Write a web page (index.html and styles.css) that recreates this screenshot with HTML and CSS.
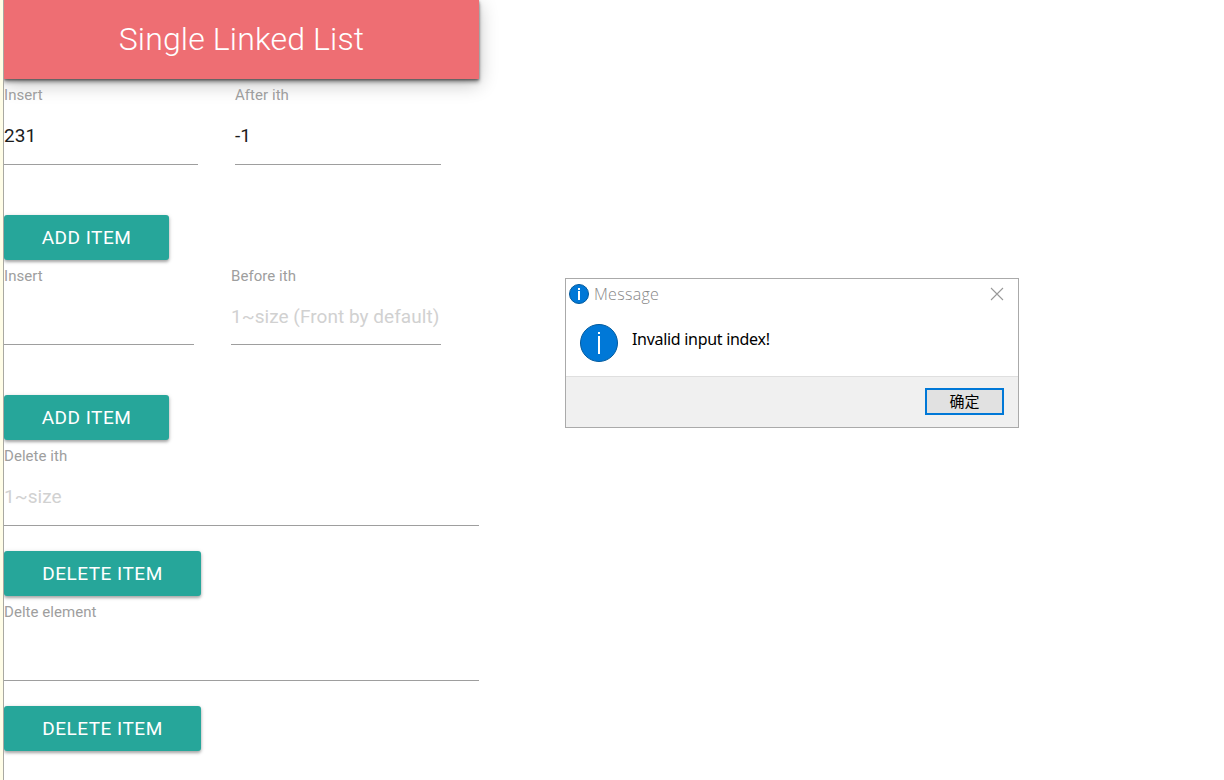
FILE: index.html
```
<!DOCTYPE html>
<html lang="en">
<head>
<meta charset="utf-8">
<title>Single Linked List</title>
<link rel="stylesheet" href="styles.css">
</head>
<body>
<main class="page">
  <div class="rail"></div>
  <aside class="panel">
    <h1 class="banner"><span>Single Linked List</span></h1>
    <section class="operation tall">
      <div class="fields after">
        <div class="field"><label class="label">Insert</label><div class="value">231</div></div>
        <div class="field"><label class="label">After ith</label><div class="value">-1</div></div>
      </div>
      <button class="action add">ADD ITEM</button>
    </section>
    <section class="operation">
      <div class="fields before">
        <div class="field"><label class="label">Insert</label></div>
        <div class="field"><label class="label">Before ith</label><div class="value hint">1~size (Front by default)</div></div>
      </div>
      <button class="action add">ADD ITEM</button>
    </section>
    <section class="operation tall compact">
      <div class="fields">
        <div class="field"><label class="label">Delete ith</label><div class="value hint">1~size</div></div>
      </div>
      <button class="action delete">DELETE ITEM</button>
    </section>
    <section class="operation compact">
      <div class="fields">
        <div class="field"><label class="label">Delte element</label></div>
      </div>
      <button class="action delete">DELETE ITEM</button>
    </section>
  </aside>
  <div class="canvas">
    <div class="dialog" role="dialog">
      <div class="titlebar">
        <svg width="20" height="20" viewBox="0 0 20 20"><circle cx="10" cy="10" r="9.5" fill="#0078d7" stroke="#005a9e"/><path d="M9 4h2v2H9zM9 7h2v9H9z" fill="#fff"/></svg>
        <span class="caption">Message</span>
        <svg class="close" width="14" height="14" viewBox="0 0 14 14"><path d="M1 1l12 12M13 1L1 13" stroke="#999" stroke-width="1.1"/></svg>
      </div>
      <div class="message">
        <svg width="38" height="38" viewBox="0 0 38 38"><circle cx="19" cy="19" r="18.5" fill="#0078d7" stroke="#005a9e"/><path d="M18 8h2v2h-2zM18 12h2v18h-2z" fill="#fff"/></svg>
        <span class="text">Invalid input index!</span>
      </div>
      <div class="footer"><button class="ok" lang="zh">确定</button></div>
    </div>
  </div>
</main>
</body>
</html>
```
FILE: styles.css
```
* { box-sizing: border-box; }
body { margin: 0; background: #fff; font-family: Roboto, sans-serif; overflow: hidden; }
button { font: inherit; margin: 0; }
svg { display: block; flex: none; }
.page { display: flex; height: 780px; }
.rail { flex: none; width: 4px; background: #fffde7; border-right: 1px solid #a9a9a2; }
.panel { width: 475px; flex: none; clip-path: inset(0 -40px 0 0); }
.banner {
  height: 79px; margin: 0; padding-bottom: 2px; display: flex; align-items: center; justify-content: center;
  background: #ee6e73; color: #fff; font-size: 32px; font-weight: 300; line-height: 40px;
  letter-spacing: .15px;
  box-shadow: 0 3px 4px rgba(0,0,0,.4), 0 5px 18px rgba(0,0,0,.24), 0 1px 2px rgba(0,0,0,.4);
}
.operation { display: flex; flex-direction: column; align-items: flex-start; gap: 50px; }
.compact { gap: 25px; }
.fields { display: grid; grid-template-columns: 1fr; width: 100%; height: 85px; }
.tall .fields { height: 86px; }
.after { grid-template-columns: 194px 206px; column-gap: 37px; }
.before { grid-template-columns: 190px 210px; column-gap: 37px; }
.field { border-bottom: 1px solid #9e9e9e; padding-top: 6px; white-space: nowrap; }
.label { display: block; height: 20px; line-height: 20px; font-size: 15px; letter-spacing: .05px; color: #9e9e9e; }
.value { margin-top: 17px; line-height: 28px; font-size: 19px; letter-spacing: .04px; color: #1c1c1c; }
.hint { color: #d1d1d1; }
.action {
  height: 45px; padding: 0; border: 0; border-radius: 3px; background: #26a69a; color: #fff;
  font-size: 19px; letter-spacing: .5px; white-space: nowrap;
  box-shadow: 0 2px 3px rgba(0,0,0,.28), 0 1px 5px rgba(0,0,0,.14);
}
.add { width: 165px; }
.delete { width: 197px; }
.canvas { flex: 1; padding: 278px 0 0 86px; }
.dialog { width: 454px; height: 150px; border: 1px solid #aaa; background: #fff; display: flex; flex-direction: column; }
.titlebar { display: flex; align-items: center; height: 30px; padding: 0 14px 0 3px; }
.caption { margin-left: 5px; font: 300 16px "Open Sans", sans-serif; letter-spacing: .3px; color: #888; }
.close { margin-left: auto; }
.message { flex: 1; display: flex; padding: 15px 0 0 14px; }
.text { margin: 4px 0 0 14px; font: 16px/22px "Noto Sans", sans-serif; letter-spacing: -.3px; color: #000; }
.footer { height: 51px; border-top: 1px solid #dfdfdf; background: #f0f0f0; padding: 11px 14px 0 0; display: flex; justify-content: flex-end; }
.ok { width: 79px; height: 27px; padding: 0 0 1px 0; border: 2px solid #0078d7; background: #e1e1e1; color: #000; font: 15px/20px "Noto Sans CJK SC", sans-serif; }
```
